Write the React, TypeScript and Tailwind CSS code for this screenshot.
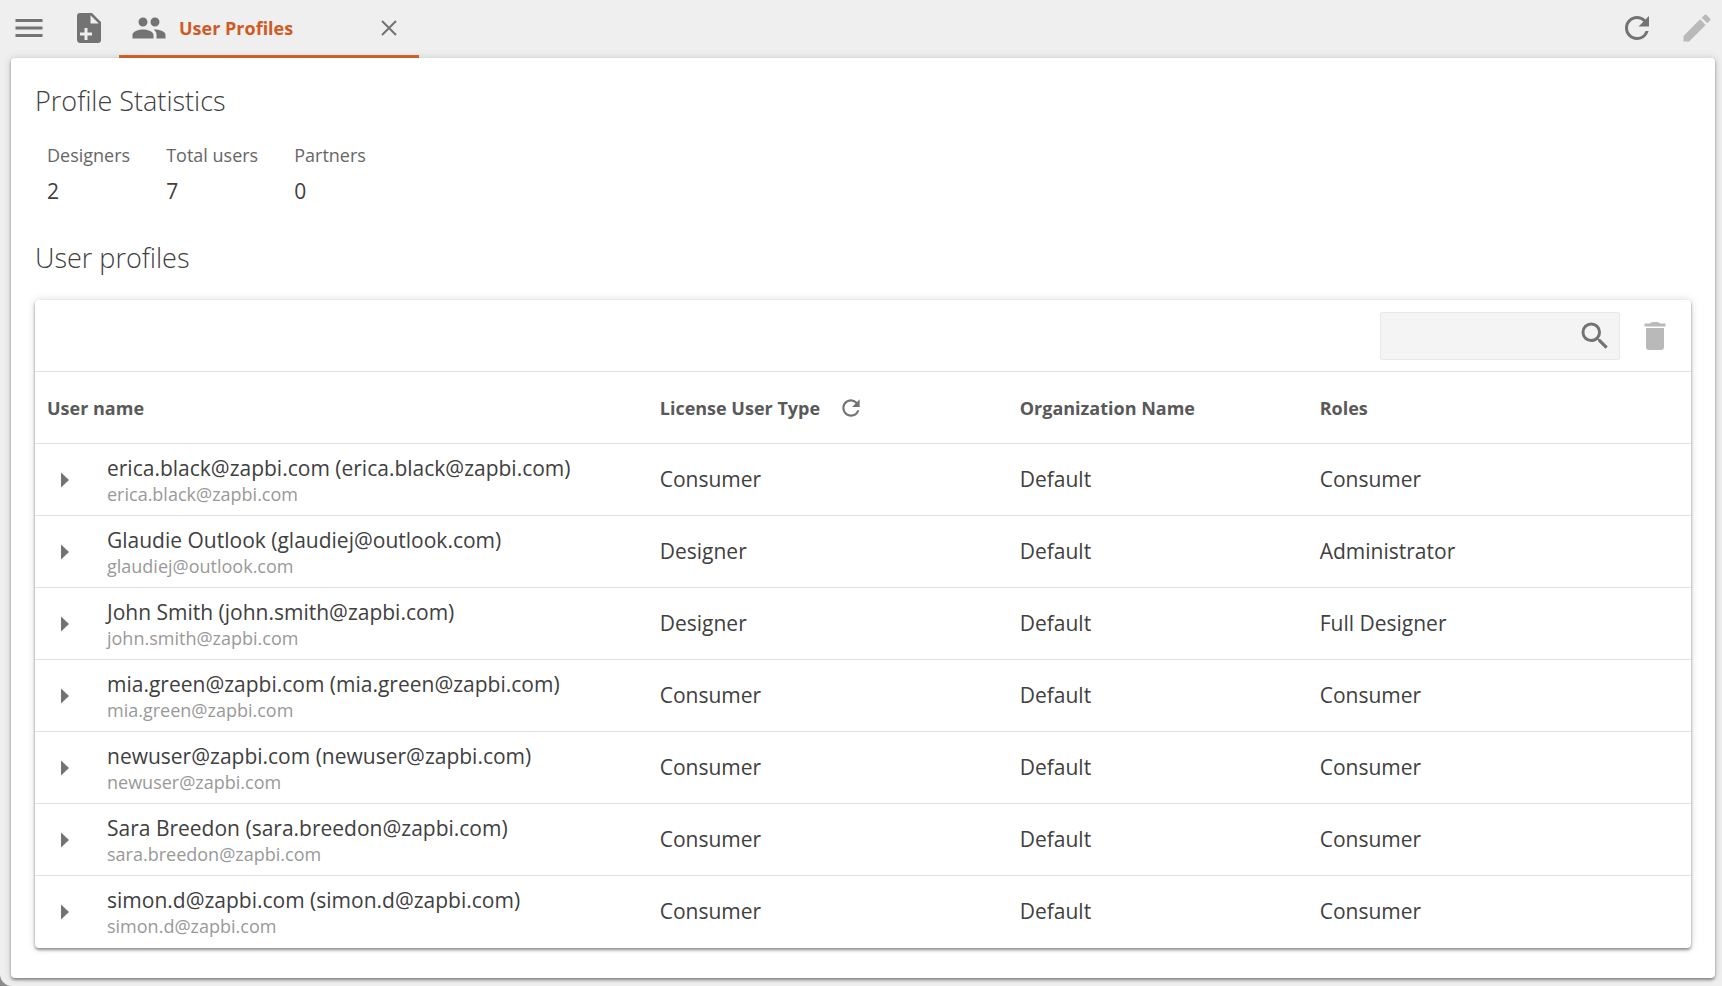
import { useState } from "react"
import { MdEdit, MdMenu, MdPeople, MdRefresh, MdSearch } from "react-icons/md"

interface UserProfile {
  name: string
  login: string
  license: string
  organization: string
  role: string
}

const users: UserProfile[] = [
  { name: "erica.black@zapbi.com", login: "erica.black@zapbi.com", license: "Consumer", organization: "Default", role: "Consumer" },
  { name: "Glaudie Outlook", login: "glaudiej@outlook.com", license: "Designer", organization: "Default", role: "Administrator" },
  { name: "John Smith", login: "john.smith@zapbi.com", license: "Designer", organization: "Default", role: "Full Designer" },
  { name: "mia.green@zapbi.com", login: "mia.green@zapbi.com", license: "Consumer", organization: "Default", role: "Consumer" },
  { name: "newuser@zapbi.com", login: "newuser@zapbi.com", license: "Consumer", organization: "Default", role: "Consumer" },
  { name: "Sara Breedon", login: "sara.breedon@zapbi.com", license: "Consumer", organization: "Default", role: "Consumer" },
  { name: "simon.d@zapbi.com", login: "simon.d@zapbi.com", license: "Consumer", organization: "Default", role: "Consumer" },
]

const stats = [
  { label: "Designers", value: 2 },
  { label: "Total users", value: 7 },
  { label: "Partners", value: 0 },
]

function FilePlusIcon() {
  return (
    <svg viewBox="0 0 24 24" className="size-9 fill-current" aria-hidden="true">
      <path d="M13,9H18.5L13,3.5V9M6,2H14L20,8V20A2,2 0 0,1 18,22H6C4.89,22 4,21.1 4,20V4C4,2.89 4.89,2 6,2M11,15V12H9V15H6V17H9V20H11V17H14V15H11Z" />
    </svg>
  )
}

function CloseIcon() {
  return (
    <svg viewBox="0 0 16 16" className="size-4 stroke-current" fill="none" strokeWidth="2" aria-hidden="true">
      <path d="M1 1L15 15M15 1L1 15" />
    </svg>
  )
}

function TrashIcon() {
  return (
    <svg viewBox="0 0 22 28" className="h-7 w-[22px] fill-current" aria-hidden="true">
      <path d="M7 0.5Q8 0 9 0H13Q14 0 15 0.5L16 1.5H21.5V4.5H0.5V1.5H6Z" />
      <path d="M2 6H20V25Q20 28 17 28H5Q2 28 2 25Z" />
    </svg>
  )
}

function TopBar() {
  return (
    <header className="flex h-[58px] items-start text-[#737373]">
      <button aria-label="Menu" className="ml-[11px] h-14">
        <MdMenu className="size-9" />
      </button>
      <button aria-label="New resource" className="ml-6 h-14">
        <FilePlusIcon />
      </button>
      <div className="ml-3 flex h-full w-[300px] items-center border-b-3 border-[#dc6426] pl-3">
        <a href="#profiles" className="flex flex-1 items-center gap-3 text-lg font-bold text-[#cf5a24]">
          <MdPeople className="size-9 text-[#737373]" />
          User Profiles
        </a>
        <button aria-label="Close tab" className="mr-[22px]">
          <CloseIcon />
        </button>
      </div>
      <div className="mr-[7px] ml-auto flex gap-6">
        <button aria-label="Refresh" className="h-14">
          <MdRefresh className="size-9" />
        </button>
        <button aria-label="Edit" disabled className="h-14 text-[#b9b9b9]">
          <MdEdit className="size-9" />
        </button>
      </div>
    </header>
  )
}

export default function App() {
  const [search, setSearch] = useState("")

  const visible = users.filter((u) =>
    `${u.name} ${u.login}`.toLowerCase().includes(search.toLowerCase())
  )

  return (
    <div className="bg-[#8c8c8c] font-['Open_Sans',sans-serif] text-[#404040]">
      <div className="flex min-h-screen flex-col rounded-bl-xl bg-[#efefef] pb-2">
        <TopBar />

        <main className="mr-[7px] ml-[11px] flex-1 rounded bg-white px-6 pt-[23px] pb-[30px] shadow-[0_2px_3px_rgba(0,0,0,0.4),0_0_8px_rgba(0,0,0,0.15)]">
          <h1 className="text-[27px] leading-10 font-light">Profile Statistics</h1>

          <dl className="mt-4 flex gap-9 px-3">
            {stats.map((s) => (
              <div key={s.label}>
                <dt className="text-lg leading-9 text-[#666666]">{s.label}</dt>
                <dd className="text-[21px] leading-9">{s.value}</dd>
              </div>
            ))}
          </dl>

          <h2 className="mt-[29px] text-[27px] leading-10 font-light">User profiles</h2>

          <section id="profiles" className="mt-[22px] rounded bg-white shadow-[0_2px_3px_rgba(0,0,0,0.4),0_0_8px_rgba(0,0,0,0.15)]">
            <div className="flex h-[72px] items-center justify-end gap-6 border-b border-[#e0e0e0] pr-[25px]">
              <div className="flex h-12 w-60 items-center rounded-xs border border-[#e8e8e8] bg-[#f4f4f4] pr-1.5">
                <input
                  type="text"
                  aria-label="Search user profiles"
                  value={search}
                  onChange={(e) => setSearch(e.target.value)}
                  className="h-full min-w-0 flex-1 px-3 text-lg outline-none"
                />
                <button aria-label="Search" className="text-[#737373]">
                  <MdSearch className="size-9" />
                </button>
              </div>
              <button aria-label="Delete" disabled className="text-[#b9b9b9]">
                <TrashIcon />
              </button>
            </div>

            <table className="w-full table-fixed border-separate border-spacing-0 text-left">
              <colgroup>
                <col className="w-[37%]" />
                <col className="w-[360px]" />
                <col className="w-[300px]" />
                <col />
              </colgroup>
              <thead>
                <tr className="h-[72px] text-lg text-[#595959] *:border-b *:border-[#e0e0e0] *:px-3 *:font-bold">
                  <th>User name</th>
                  <th>
                    <div className="flex items-center gap-[18px]">
                      License User Type
                      <button aria-label="Refresh license types" className="text-[#737373]">
                        <MdRefresh className="size-[26px]" />
                      </button>
                    </div>
                  </th>
                  <th>Organization Name</th>
                  <th>Roles</th>
                </tr>
              </thead>
              <tbody className="text-[21px]">
                {visible.map((u) => (
                  <tr key={u.login} className="h-[72px] *:border-b *:border-[#e0e0e0] last:*:border-transparent">
                    <td>
                      <div className="flex items-center">
                        <button aria-label={`Expand ${u.name}`} className="flex w-[72px] justify-start pl-[26px]">
                          <svg viewBox="0 0 8 16" className="h-4 w-2 fill-[#737373]" aria-hidden="true">
                            <path d="M0 0.5L8 8L0 15.5Z" />
                          </svg>
                        </button>
                        <div>
                          <div className="leading-7">{u.name} ({u.login})</div>
                          <div className="text-lg leading-6 text-[#999999]">{u.login}</div>
                        </div>
                      </div>
                    </td>
                    <td className="px-3 pt-px">{u.license}</td>
                    <td className="px-3 pt-px">{u.organization}</td>
                    <td className="px-3 pt-px">{u.role}</td>
                  </tr>
                ))}
              </tbody>
            </table>
          </section>
        </main>
      </div>
    </div>
  )
}
